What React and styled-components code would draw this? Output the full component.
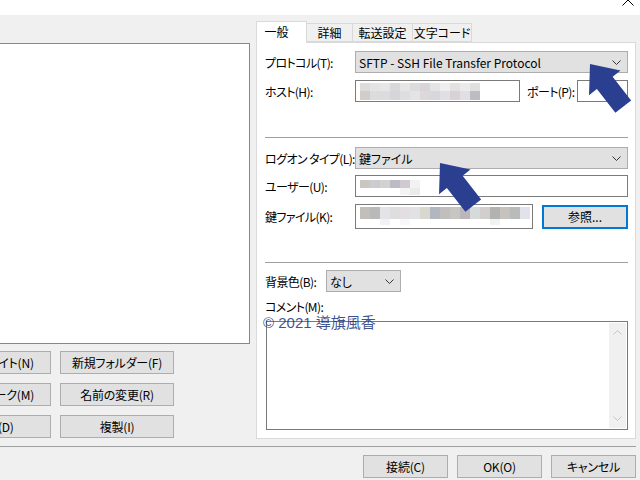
import React from "react";
import styled, { createGlobalStyle } from "styled-components";

const GlobalStyle = createGlobalStyle`
  html, body {
    margin: 0;
    padding: 0;
    background: #f0f0f0;
  }
  body {
    font-family: "Noto Sans CJK JP", "Noto Sans", sans-serif;
    font-size: 12px;
    color: #000;
  }
`;

const hostMosaic = [
  ["#dcdcdc", "#e4e4e4", "#e8e6e8", "#d8d8d8", "#e6e6e6", "#dcdcdc", "#d8d4d8", "#e4e4e4", "#eeeeee", "#e2e2e2", "#ebebeb", "#e0e0e0"],
  ["#d2cdc8", "#dadde0", "#dcdcdc", "#d6d6da", "#dedee2", "#e4e4e4", "#dcd8dc", "#d8d8dc", "#e2dee2", "#d6d2d6", "#e0e0e4", "#bcbcc2"],
];

const userMosaic = [
  ["#cac6c2", "#cbcbd0", "#d2d2d2", "#bcbcc4", "#cfcacf", "#f2f2f2"],
  ["#ffffff", "#ffffff", "#ffffff", "#ffffff", "#f4f4f4", "#ebebeb"],
];

const keyMosaic = [
  ["#c2beba", "#b9b9b9", "#e4e4e8", "#dedede", "#e2dee2", "#e2e2e2", "#d8d8d0", "#b2b6be", "#c2bebb", "#c6c6c2", "#bab6ba", "#d6dada", "#d2cece", "#b2b2b2", "#c6c2be", "#bababa", "#e2e2ea"],
  ["#ffffff", "#ffffff", "#f2f2f2", "#ffffff", "#f8f8f8", "#ffffff", "#ffffff", "#ffffff", "#ffffff", "#ffffff", "#ffffff", "#ffffff", "#ffffff", "#f2f2f2", "#ffffff", "#ffffff", "#ffffff"],
];

const tabs = [
  { label: "一般", width: 51, active: true },
  { label: "詳細", width: 47 },
  { label: "転送設定", width: 61 },
  { label: "文字コード", width: 60 },
];

// 画像の一部をぼかしたモザイク
function Mosaic({ rows, cellW = 10, heights }) {
  const w = rows[0].length * cellW;
  const h = heights.reduce((a, b) => a + b, 0);
  let y = 0;
  return (
    <svg width={w} height={h} style={{ display: "block" }}>
      {rows.map((row, r) => {
        const top = y;
        y += heights[r];
        return row.map((c, i) => (
          <rect key={r + "-" + i} x={i * cellW} y={top} width={cellW} height={heights[r]} fill={c} />
        ));
      })}
    </svg>
  );
}

function Chevron({ color = "#333", down = true }) {
  return (
    <svg width="9" height="5" viewBox="0 0 9 5">
      <polyline
        points={down ? "0.5,0.5 4.5,4.5 8.5,0.5" : "0.5,4.5 4.5,0.5 8.5,4.5"}
        fill="none"
        stroke={color}
        strokeWidth="1"
      />
    </svg>
  );
}

function Dropdown({ value, width }) {
  return (
    <Select $width={width}>
      <span>{value}</span>
      <Chevron />
    </Select>
  );
}

const arrowShape = "0,0 20,24 10,24 10,54 -10,54 -10,24 -20,24";

export default function App() {
  return (
    <>
      <GlobalStyle />
      <Page>
        <TitleBar>
          <svg width="12" height="12" viewBox="0 0 12 12">
            <line x1="0.5" y1="0.5" x2="11.5" y2="11.5" stroke="#000" strokeWidth="1" />
            <line x1="11.5" y1="0.5" x2="0.5" y2="11.5" stroke="#000" strokeWidth="1" />
          </svg>
        </TitleBar>

        <Main>
          {/* サイト一覧（左側、画面外にはみ出している） */}
          <LeftColumn>
            <ListBox />
            <ButtonGrid>
              <PushButton>新しいサイト(N)</PushButton>
              <PushButton>新規フォルダー(F)</PushButton>
              <PushButton>ブックマーク(M)</PushButton>
              <PushButton>名前の変更(R)</PushButton>
              <PushButton>削除(D)</PushButton>
              <PushButton>複製(I)</PushButton>
            </ButtonGrid>
          </LeftColumn>

          <RightColumn>
            <TabRow>
              {tabs.map((t) => (
                <Tab key={t.label} $active={t.active} $width={t.width}>
                  {t.label}
                </Tab>
              ))}
            </TabRow>
            <TabPanel>
              <FieldRow $mt={0}>
                <Label $width={90}>プロトコル(T):</Label>
                <Dropdown value="SFTP - SSH File Transfer Protocol" />
              </FieldRow>
              <FieldRow $mt={7}>
                <Label $width={90}>ホスト(H):</Label>
                <TextBox $width={165} $padTop={2}>
                  <Mosaic rows={hostMosaic} heights={[8, 9]} />
                </TextBox>
                <Label $width={50} $ml={7}>ポート(P):</Label>
                <TextBox $width={51} />
              </FieldRow>
              <Rule $mt={35} />
              <FieldRow $mt={9}>
                <Label $width={90}>ログオン タイプ(L):</Label>
                <Dropdown value="鍵ファイル" />
              </FieldRow>
              <FieldRow $mt={6}>
                <Label $width={90}>ユーザー(U):</Label>
                <TextBox $padTop={4}>
                  <Mosaic rows={userMosaic} heights={[8, 7]} />
                </TextBox>
              </FieldRow>
              <FieldRow $mt={7} $h={25}>
                <Label $width={90}>鍵ファイル(K):</Label>
                <TextBox $width={178} $padTop={2}>
                  <Mosaic rows={keyMosaic} heights={[12, 6]} />
                </TextBox>
                <BrowseButton>参照...</BrowseButton>
              </FieldRow>
              <Rule $mt={33} />
              <FieldRow $mt={7}>
                <Label $width={61}>背景色(B):</Label>
                <Dropdown value="なし" width={75} />
              </FieldRow>
              <FieldRow $mt={4} $h={20}>
                <Label>コメント(M):</Label>
              </FieldRow>
              <CommentBox>
                <ScrollBar>
                  <Chevron color="#c4c4c4" down={false} />
                  <Chevron color="#c4c4c4" />
                </ScrollBar>
              </CommentBox>
            </TabPanel>
          </RightColumn>
        </Main>

        <Rule $width={636} />

        <Footer>
          <PushButton $width={85}>接続(C)</PushButton>
          <PushButton $width={85}>OK(O)</PushButton>
          <PushButton $width={85}>キャンセル</PushButton>
        </Footer>

        <Watermark>© 2021 導旗風香</Watermark>

        <ArrowLayer width="640" height="480">
          <polygon points={arrowShape} transform="translate(590 64) rotate(-38)" />
          <polygon points={arrowShape} transform="translate(440 163) rotate(-38)" />
        </ArrowLayer>
      </Page>
    </>
  );
}

const Page = styled.div`
  position: relative;
  width: 640px;
  height: 480px;
  overflow: hidden;
  background: #f0f0f0;
  display: flex;
  flex-direction: column;
  font-feature-settings: "palt";
`;

const TitleBar = styled.div`
  height: 15px;
  flex-shrink: 0;
  background: #fff;
  display: flex;
  justify-content: flex-end;
  align-items: flex-start;
  overflow: hidden;
  svg {
    margin-top: -6px;
    margin-right: 6px;
  }
`;

const Main = styled.div`
  display: flex;
  height: 431px;
  flex-shrink: 0;
`;

const LeftColumn = styled.div`
  margin-left: -70px;
  width: 320px;
  flex-shrink: 0;
  padding-top: 28px;
  box-sizing: border-box;
  display: flex;
  flex-direction: column;
`;

const ListBox = styled.div`
  height: 301px;
  box-sizing: border-box;
  border: 1px solid #828790;
  background: #fff;
`;

const ButtonGrid = styled.div`
  display: grid;
  grid-template-columns: 114px 114px;
  gap: 9px;
  padding-left: 7px;
  margin-top: 7px;
`;

const PushButton = styled.button`
  width: ${(p) => (p.$width ? p.$width + "px" : "auto")};
  height: 23px;
  box-sizing: border-box;
  border: 1px solid #adadad;
  background: #e1e1e1;
  font: inherit;
  font-size: 12px;
  letter-spacing: -0.2px;
  color: #000;
  padding: 0;
  white-space: nowrap;
  overflow: hidden;
`;

const RightColumn = styled.div`
  margin-left: 6px;
  width: 380px;
  flex-shrink: 0;
  padding-top: 6px;
  display: flex;
  flex-direction: column;
`;

const TabRow = styled.div`
  display: flex;
  align-items: flex-end;
  height: 21px;
`;

const Tab = styled.div`
  width: ${(p) => p.$width}px;
  height: ${(p) => (p.$active ? 22 : 19)}px;
  margin-bottom: ${(p) => (p.$active ? -1 : 0)}px;
  margin-left: ${(p) => (p.$active ? 0 : -1)}px;
  position: relative;
  z-index: ${(p) => (p.$active ? 1 : 0)};
  box-sizing: border-box;
  border: 1px solid #d9d9d9;
  border-bottom: ${(p) => (p.$active ? "none" : "1px solid #d9d9d9")};
  background: ${(p) => (p.$active ? "#fff" : "#f0f0f0")};
  display: flex;
  align-items: center;
  justify-content: center;
  padding-right: ${(p) => (p.$active ? 10 : 0)}px;
  padding-bottom: ${(p) => (p.$active ? 2 : 0)}px;
  font-size: 12px;
  white-space: nowrap;
`;

const TabPanel = styled.div`
  height: 397px;
  box-sizing: border-box;
  border: 1px solid #d9d9d9;
  background: #fff;
  padding: 8px 7px 0 8px;
  display: flex;
  flex-direction: column;
`;

const FieldRow = styled.div`
  display: flex;
  align-items: center;
  height: ${(p) => p.$h || 22}px;
  margin-top: ${(p) => p.$mt}px;
`;

const Label = styled.div`
  width: ${(p) => (p.$width ? p.$width + "px" : "auto")};
  margin-left: ${(p) => p.$ml || 0}px;
  flex-shrink: 0;
  white-space: nowrap;
  font-size: 12px;
  letter-spacing: -0.6px;
`;

const Select = styled.div`
  ${(p) => (p.$width ? `width: ${p.$width}px;` : "flex: 1;")}
  height: 100%;
  box-sizing: border-box;
  background: #e1e1e1;
  border: 1px solid #adadad;
  display: flex;
  align-items: center;
  justify-content: space-between;
  padding: 0 6px 0 3px;
  font-size: 12px;
  white-space: nowrap;
  svg {
    flex-shrink: 0;
  }
`;

const TextBox = styled.div`
  ${(p) => (p.$width ? `width: ${p.$width}px;` : "flex: 1;")}
  height: 100%;
  box-sizing: border-box;
  border: 1px solid #7a7a7a;
  background: #fff;
  padding: ${(p) => p.$padTop || 0}px 4px 0 4px;
  overflow: hidden;
`;

const BrowseButton = styled.button`
  width: 86px;
  height: 24px;
  margin-left: 9px;
  box-sizing: border-box;
  border: 2px solid #0078d7;
  background: #e1e1e1;
  font: inherit;
  font-size: 12px;
  color: #000;
  padding: 0;
`;

const Rule = styled.div`
  height: 1px;
  flex-shrink: 0;
  width: ${(p) => (p.$width ? p.$width + "px" : "auto")};
  margin-top: ${(p) => p.$mt || 0}px;
  background: #a0a0a0;
`;

const CommentBox = styled.div`
  height: 109px;
  margin-top: 5px;
  margin-left: 1px;
  box-sizing: border-box;
  border: 1px solid #7a7a7a;
  background: #fff;
  display: flex;
  justify-content: flex-end;
  padding: 1px;
`;

const ScrollBar = styled.div`
  width: 17px;
  background: #f0f0f0;
  display: flex;
  flex-direction: column;
  justify-content: space-between;
  align-items: center;
  padding: 7px 0;
`;

const Footer = styled.div`
  display: flex;
  justify-content: flex-end;
  gap: 9px;
  padding: 8px 4px 0 0;
`;

const Watermark = styled.div`
  position: absolute;
  left: 263px;
  top: 314px;
  font-family: "Liberation Sans", "Noto Sans CJK JP", sans-serif;
  font-size: 15px;
  line-height: 18px;
  color: rgba(28, 52, 120, 0.85);
  white-space: nowrap;
  font-feature-settings: normal;
`;

const ArrowLayer = styled.svg`
  position: absolute;
  left: 0;
  top: 0;
  pointer-events: none;
  polygon {
    fill: #2b3f91;
  }
`;
